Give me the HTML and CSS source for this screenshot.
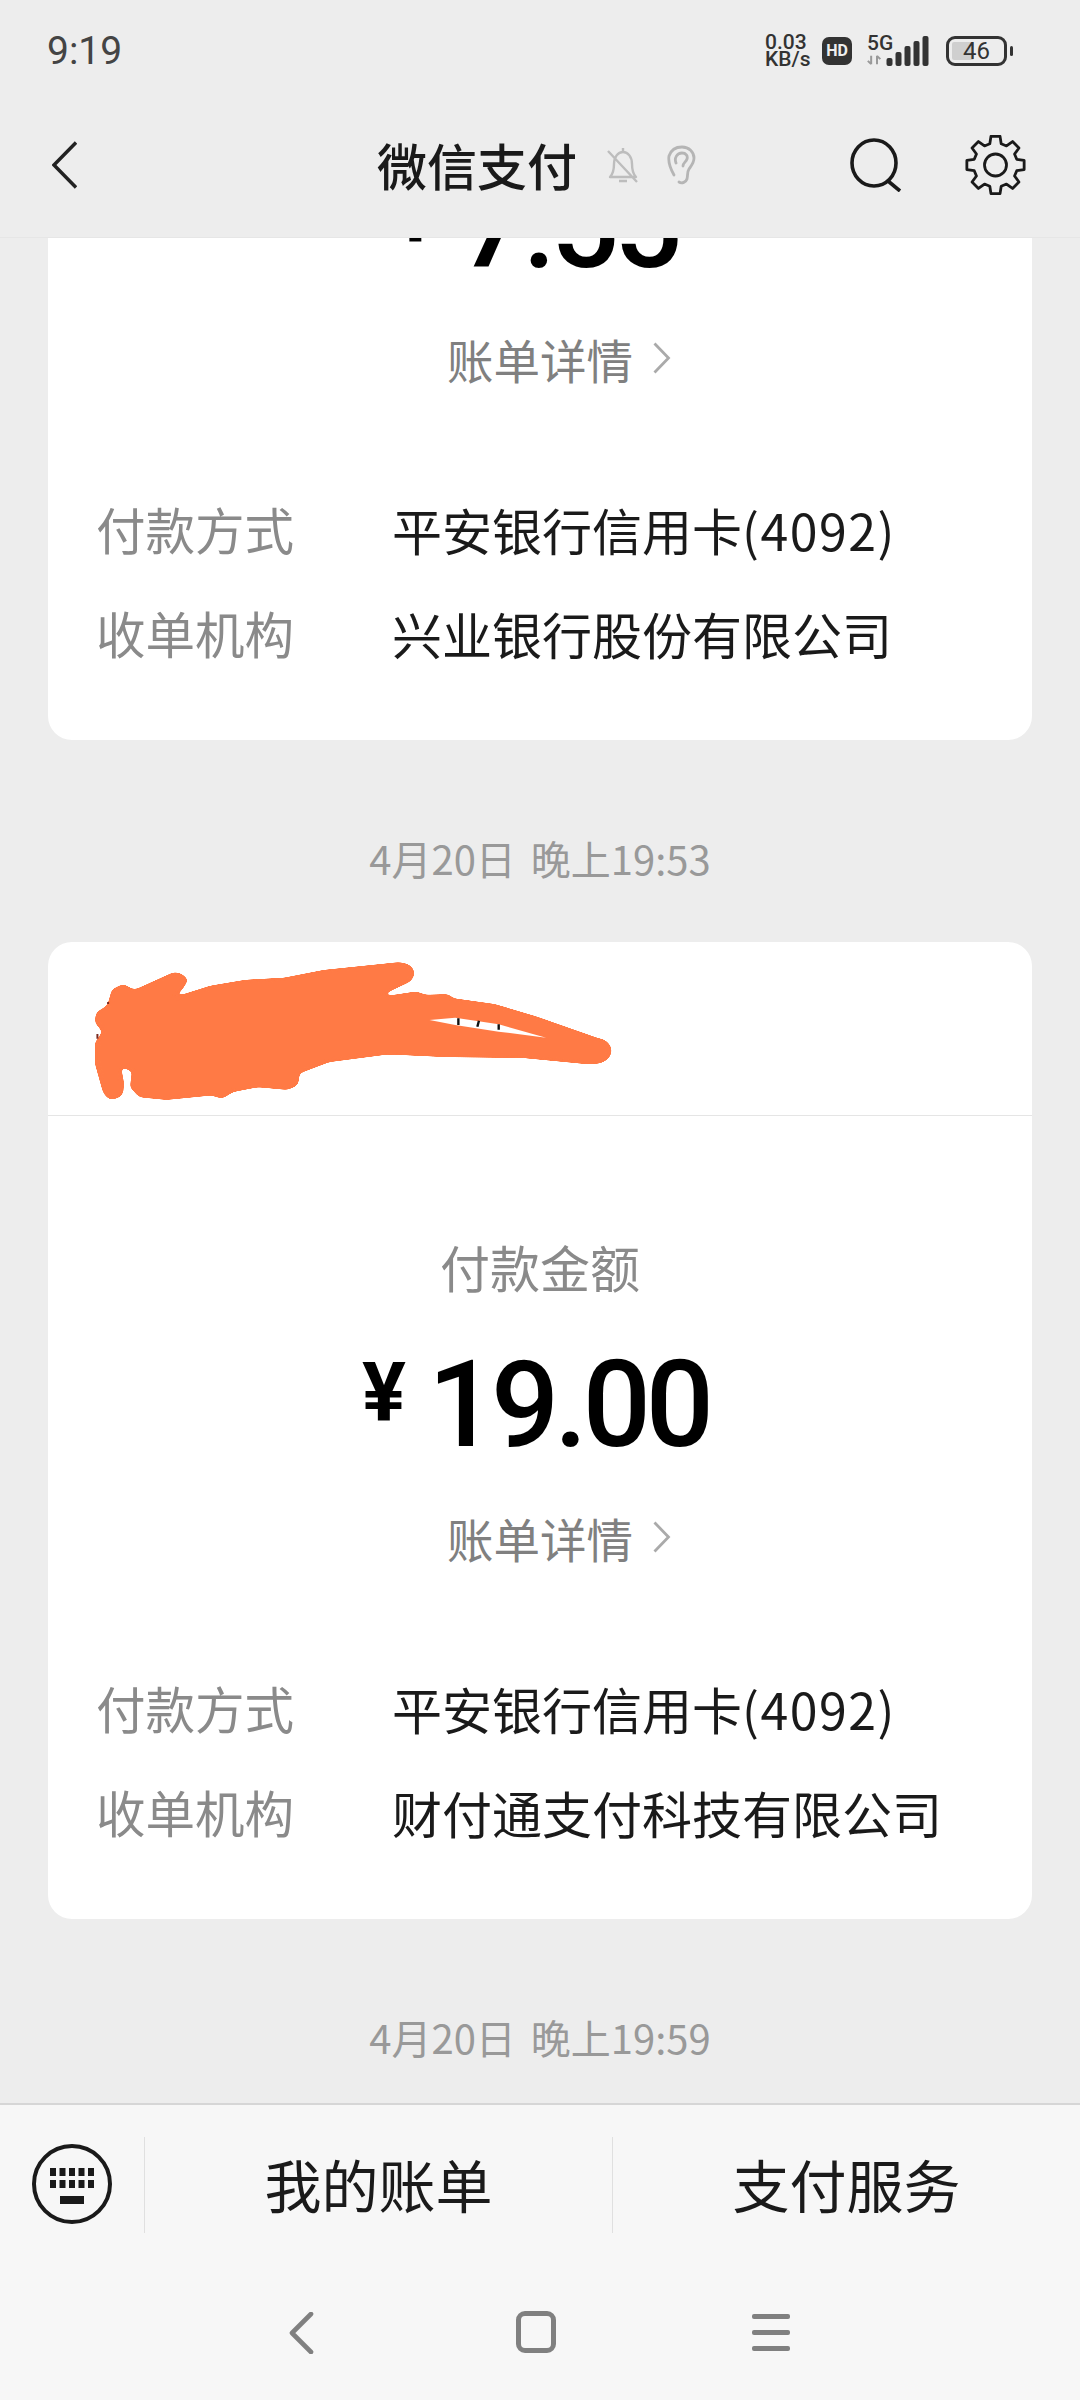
FILE: index.html
```html
<!DOCTYPE html>
<html lang="zh">
<head>
<meta charset="utf-8">
<title>微信支付</title>
<link rel="stylesheet" href="styles.css">
</head>
<body>
<div class="app">
  <header class="top">
    <div class="status">
      <span class="clock">9:19</span>
      <div class="status-right">
        <div class="speed"><span>0.03</span><span>KB/s</span></div>
        <span class="hd">HD</span>
        <div class="net">
          <span class="five-g">5G</span>
          <svg class="arrows" viewBox="0 0 18 12"><path d="M5 1v10M1 7l4 4M12 1v10M12 1l4 4" fill="none" stroke="#999" stroke-width="2.4"/></svg>
        </div>
        <svg class="signal" viewBox="0 0 42 30"><g fill="#333"><rect x="0" y="22" width="6" height="8" rx="2"/><rect x="9" y="16" width="6" height="14" rx="2"/><rect x="18" y="10" width="6" height="20" rx="2"/><rect x="27" y="5" width="6" height="25" rx="2"/><rect x="36" y="0" width="6" height="30" rx="2"/></g></svg>
        <div class="battery"><span class="battery-fill"></span><span class="battery-num">46</span></div>
        <span class="battery-nub"></span>
      </div>
    </div>
    <nav class="nav">
      <svg class="back" viewBox="0 0 25 48"><path d="M24 1.5 2 24l22 22.5" fill="none" stroke="#222" stroke-width="3.4"/></svg>
      <h1 class="title">微信支付</h1>
      <svg class="bell" viewBox="0 0 36 38"><path d="M18 2v3M5 31c3-3 4-6 4-13 0-7 4-12 9-12s9 5 9 12c0 7 1 10 4 13ZM14 35h8M3 5l29 31" fill="none" stroke="#bdbdbd" stroke-width="2.4" stroke-linejoin="round"/></svg>
      <svg class="ear" viewBox="0 0 30 40"><path d="M7 30C3 23 1 17 2 11 4 5 9 2 15 2c7 0 12 5 12 11 0 5-3 8-5 11-2 3-1 6-2 10-1 3-5 5-8 3M9 18c-2-5 1-10 6-10 4 0 6 3 5 6-1 3-4 4-4 7" fill="none" stroke="#b5b5b5" stroke-width="2.8" stroke-linecap="round"/></svg>
      <div class="nav-right">
        <svg class="search" viewBox="0 0 53 54"><ellipse cx="24" cy="25" rx="22" ry="23" fill="none" stroke="#1a1a1a" stroke-width="3.6"/><path d="m38 43 12 10" fill="none" stroke="#1a1a1a" stroke-width="3.6"/></svg>
        <svg class="gear" viewBox="0 0 60 60"><path d="M24.31 8.75 25.46 1.36H34.54L35.69 8.75 41 10.95 47.05 6.54 53.46 12.95 49.05 19 51.25 24.31 58.64 25.46V34.54L51.25 35.69 49.05 41 53.46 47.05 47.05 53.46 41 49.05 35.69 51.25 34.54 58.64H25.46L24.31 51.25 19 49.05 12.95 53.46 6.54 47.05 10.95 41 8.75 35.69 1.36 34.54V25.46L8.75 24.31 10.95 19 6.54 12.95 12.95 6.54 19 10.95Z" fill="none" stroke="#1a1a1a" stroke-width="2.8" stroke-linejoin="round"/><circle cx="30" cy="30" r="11" fill="none" stroke="#1a1a1a" stroke-width="2.8"/></svg>
      </div>
    </nav>
  </header>

  <main class="feed">
    <article class="card card-clipped">
      <p class="amount amount-first"><span class="yen">¥</span><span class="digits">7.55</span></p>
      <p class="detail"><span>账单详情</span><svg class="detail-arrow" viewBox="0 0 18 32"><path d="m1.5 1.5 14 14.5-14 14.5" fill="none" stroke="#aaa" stroke-width="2.8"/></svg></p>
      <dl class="rows">
        <div class="row"><dt>付款方式</dt><dd>平安银行信用卡<span class="num">(4092)</span></dd></div>
        <div class="row"><dt>收单机构</dt><dd>兴业银行股份有限公司</dd></div>
      </dl>
    </article>

    <p class="time">4月20日 晚上19:53</p>

    <article class="card">
      <div class="card-head">
        <svg class="scribble" viewBox="20 36 1548 516" preserveAspectRatio="none">
          <defs>
            <filter id="soft" x="-5%" y="-10%" width="110%" height="120%">
              <feGaussianBlur stdDeviation="7"/>
              <feComponentTransfer><feFuncA type="linear" slope="14" intercept="-6"/></feComponentTransfer>
            </filter>
          </defs>
          <g filter="url(#soft)" fill="#ff7a45" stroke="#ff7a45" stroke-linecap="round" stroke-linejoin="round">
            <path d="M150 260 178 225 188 183 210 170 232 185 245 185 340 134 366 150 355 172 325 205 350 205 430 175 520 157 620 150 720 127 910 104 938 130 930 150 850 195 880 205 950 192 975 202 1030 200 1042 212 1150 230 1250 265 1405 330 1428 360 1415 393 1390 396 1220 376 1030 374 880 366 730 389 650 425 645 460 625 472 550 464 485 479 460 498 435 489 320 502 255 495 235 470 240 420 195 397 205 460 200 490 180 502 165 480 146 400 146 340 166 305 146 275Z" stroke-width="14"/>
            <path d="M895 130h20" stroke-width="62" fill="none"/>
            <path d="M1400 362h8" stroke-width="74" fill="none"/>
            <path d="M325 170 345 152" stroke-width="48" fill="none"/>
            <path d="M185 480v-5" stroke-width="52" fill="none"/>
            <path d="M210 192v6" stroke-width="48" fill="none"/>
            <path d="M168 262h4" stroke-width="56" fill="none"/>
            <path d="M625 450h4" stroke-width="50" fill="none"/>
          </g>
          <path d="M985 270 1050 263 1160 283 1280 323 1160 305 1050 285Z" fill="#fff"/>
          <path d="M1058 265v20M1110 272l-4 18M1160 283v16" stroke="#111" stroke-width="6" fill="none"/>
          <path d="M145 312v14M172 216v6" stroke="#7a2a20" stroke-width="5" fill="none"/>
        </svg>
      </div>
      <p class="pay-label">付款金额</p>
      <p class="amount"><span class="yen">¥</span><span class="digits">19.00</span></p>
      <p class="detail"><span>账单详情</span><svg class="detail-arrow" viewBox="0 0 18 32"><path d="m1.5 1.5 14 14.5-14 14.5" fill="none" stroke="#aaa" stroke-width="2.8"/></svg></p>
      <dl class="rows">
        <div class="row"><dt>付款方式</dt><dd>平安银行信用卡<span class="num">(4092)</span></dd></div>
        <div class="row"><dt>收单机构</dt><dd>财付通支付科技有限公司</dd></div>
      </dl>
    </article>

    <p class="time">4月20日 晚上19:59</p>
  </main>

  <footer class="bottom">
    <div class="menu">
      <div class="kb-cell">
        <svg class="kb" viewBox="0 0 80 80"><circle cx="40" cy="40" r="38" fill="none" stroke="#1a1a1a" stroke-width="4"/><g fill="#1a1a1a"><rect x="18" y="24" width="6" height="8"/><rect x="27.5" y="24" width="6" height="8"/><rect x="37" y="24" width="6" height="8"/><rect x="46.5" y="24" width="6" height="8"/><rect x="56" y="24" width="6" height="8"/><rect x="18" y="36" width="6" height="8"/><rect x="27.5" y="36" width="6" height="8"/><rect x="37" y="36" width="6" height="8"/><rect x="46.5" y="36" width="6" height="8"/><rect x="56" y="36" width="6" height="8"/><rect x="28" y="52" width="24" height="8"/></g></svg>
      </div>
      <div class="menu-item">我的账单</div>
      <div class="menu-item">支付服务</div>
    </div>
    <div class="sysnav">
      <svg class="sys-back" viewBox="0 0 26 42"><path d="M23 2 4 21l19 19" fill="none" stroke="#808080" stroke-width="4.6" stroke-linecap="round" stroke-linejoin="round"/></svg>
      <span class="sys-home"></span>
      <span class="sys-menu"><i></i><i></i><i></i></span>
    </div>
  </footer>
</div>
</body>
</html>
```
FILE: styles.css
```css
* { box-sizing: border-box; margin: 0; padding: 0; }
html, body { width: 1080px; height: 2400px; overflow: hidden; }
body { font-family: "Noto Sans CJK SC", "Noto Sans", sans-serif; background: #ededed; }
.app { width: 1080px; height: 2400px; display: flex; flex-direction: column; overflow: hidden; background: #ededed; }

.top { height: 238px; flex: none; background: #ededed; border-bottom: 1px solid #e6e6e6; position: relative; z-index: 1; }
.status { height: 100px; display: flex; align-items: center; justify-content: space-between; padding: 2px 67px 0 47px; }
.clock { font: 400 39px/1 Roboto, sans-serif; color: #444; }
.status-right { display: flex; align-items: center; height: 36px; }
.speed { display: flex; flex-direction: column; font: 500 21px/17px Roboto, sans-serif; color: #333; width: 50px; margin-right: 7px; white-space: nowrap; }
.hd { width: 30px; height: 28px; border-radius: 7px; background: #333; color: #eee; font: 700 16px/28px Roboto, sans-serif; text-align: center; margin-right: 15px; }
.net { width: 28px; display: flex; flex-direction: column; gap: 3px; margin-right: -10px; margin-top: -2px; }
.five-g { font: 500 21px/17px Roboto, sans-serif; color: #333; }
.arrows { width: 15px; height: 10px; }
.signal { width: 45px; height: 30px; margin-right: 16px; }
.battery { position: relative; width: 61px; height: 30px; border: 3px solid #333; border-radius: 9px; display: flex; align-items: center; justify-content: center; overflow: hidden; }
.battery-fill { position: absolute; left: 3px; top: 3px; bottom: 3px; width: 22px; background: #cfcfcf; border-radius: 2px; }
.battery-num { position: relative; font: 400 24px/1 Roboto, sans-serif; color: #333; }
.battery-nub { width: 3px; height: 10px; margin-left: 3px; background: #333; border-radius: 2px; }

.nav { height: 138px; display: flex; align-items: center; padding: 0 54px 8px 52px; }
.back { width: 25px; height: 48px; flex: none; }
.title { font-size: 50px; font-weight: 500; line-height: 60px; color: #1a1a1a; margin-left: 300px; margin-top: -3px; white-space: nowrap; }
.bell { width: 36px; height: 38px; margin-left: 28px; flex: none; }
.ear { width: 30px; height: 40px; margin-left: 26px; flex: none; }
.nav-right { margin-left: auto; display: flex; align-items: center; gap: 62px; }
.search { width: 53px; height: 54px; }
.gear { width: 61px; height: 60px; }

.feed { flex: 1; min-height: 0; overflow: hidden; padding: 0 48px; }
.card { background: #fff; border-radius: 24px; overflow: hidden; }
.card-clipped { margin-top: -77px; border-radius: 0 0 24px 24px; }
.card-head { height: 174px; border-bottom: 1px solid #e5e5e5; }
.scribble { display: block; width: 612px; height: 172px; }
.pay-label { margin-top: 115px; font-size: 50px; line-height: 70px; color: #8a8a8a; text-align: center; }
.amount { margin-top: 39px; height: 130px; display: flex; align-items: center; justify-content: center; gap: 22px; padding-right: 9px; color: #000; font: 500 120px/130px Roboto, sans-serif; }
.amount-first { margin-top: 0; }
.digits { letter-spacing: -5px; }
.yen { font: 700 82px/1 Roboto, sans-serif; margin-top: -27px; }
.detail { margin-top: 32px; height: 70px; display: flex; align-items: center; justify-content: center; gap: 20px; padding-left: 38px; font-size: 46.5px; color: #808080; }
.detail-arrow { width: 18px; height: 32px; flex: none; }
.rows { margin-top: 101px; padding: 0 0 72px 48px; display: flex; flex-direction: column; gap: 34px; }
.row { display: flex; height: 70px; align-items: center; font-size: 49.5px; line-height: 70px; white-space: nowrap; }
.row dt { width: 296px; color: #8a8a8a; flex: none; }
.row dd { color: #1a1a1a; font-size: 50px; }
.num { letter-spacing: 1.5px; }
.time { height: 202px; padding-top: 88px; font-size: 40px; word-spacing: 6px; line-height: 60px; color: #999; text-align: center; }

.bottom { height: 297px; flex: none; background: #f7f7f7; border-top: 2px solid #d6d6d6; position: relative; z-index: 1; }
.menu { height: 130px; display: flex; padding-top: 32px; }
.kb-cell { width: 145px; height: 96px; flex: none; display: flex; align-items: center; padding-left: 32px; border-right: 1px solid #e0e0e0; }
.kb { width: 80px; height: 80px; margin-top: -2px; }
.menu-item { flex: 1; height: 96px; display: flex; align-items: center; justify-content: center; padding-bottom: 4px; font-size: 57px; color: #1a1a1a; border-right: 1px solid #e0e0e0; }
.menu-item:last-child { border-right: 0; }
.sysnav { height: 165px; display: flex; align-items: flex-start; padding: 76px 0 0 288px; }
.sys-back { width: 26px; height: 42px; flex: none; margin-top: 1px; }
.sys-home { width: 40px; height: 42px; margin-left: 202px; border: 5px solid #808080; border-radius: 9px; flex: none; }
.sys-menu { width: 38px; height: 37px; margin-left: 196px; margin-top: 3px; display: flex; flex-direction: column; justify-content: space-between; flex: none; }
.sys-menu i { display: block; height: 5px; background: #808080; border-radius: 2px; }
```
